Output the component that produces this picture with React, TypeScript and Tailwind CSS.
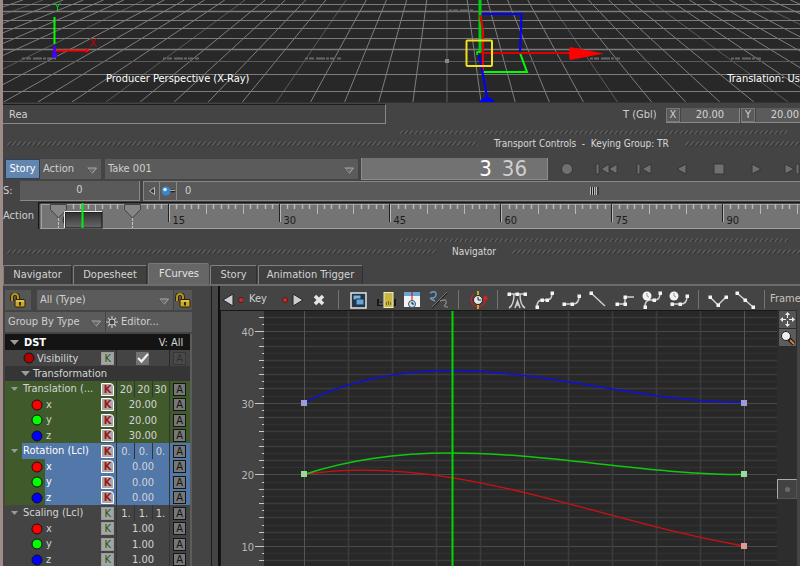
import React from "react";

const range = (from: number, to: number) =>
  Array.from({ length: to - from + 1 }, (_, i) => from + i);

/* ---------- shared bits ---------- */

function Caret({ className = "" }: { className?: string }) {
  return (
    <svg width="12" height="8" viewBox="0 0 12 8" className={className} aria-hidden="true">
      <path d="M1.500 1h9L6 6.500z" fill="#6a6a6a" stroke="#a8a8a8" />
      <path d="M6 7L1 1" stroke="#2e2e2e" strokeWidth="0.6" />
    </svg>
  );
}

function Picker({ label, value, className }: { label: string; value: string; className: string }) {
  return (
    <div className={`relative bg-[#5b5b5b] ${className}`}>
      <select
        aria-label={label}
        defaultValue={value}
        className="h-full w-full appearance-none bg-transparent pl-[3px] pr-4 text-[#cfcfcf] outline-none"
      >
        <option>{value}</option>
      </select>
      <Caret className="pointer-events-none absolute right-[3px] top-1/2 -mt-[2px]" />
    </div>
  );
}

function Hatch({ id, className }: { id: string; className: string }) {
  return (
    <svg className={className} aria-hidden="true">
      <defs>
        <pattern id={id} width="5" height="6" patternUnits="userSpaceOnUse">
          <path d="M0.5 4.5L3.5 0.5" stroke="#6c6c6c" strokeWidth="1" />
          <path d="M1.5 5.5L4.5 1.5" stroke="#303030" strokeWidth="1" />
        </pattern>
      </defs>
      <rect width="100%" height="100%" fill={`url(#${id})`} />
    </svg>
  );
}

function PanelTitle({ id, title, className, gap }: { id: string; title: string; className: string; gap: string }) {
  return (
    <div className={`flex flex-col ${className}`}>
      <div className="pl-[396px] pr-[10px]">
        <Hatch id={`${id}-top`} className="block h-[4px] w-full" />
      </div>
      <div className="flex h-[20px] items-center pl-1">
        <Hatch id={`${id}-left`} className={`h-[6px] shrink-0 ${gap}`} />
        <h2 className="mx-4 whitespace-pre text-[10px] leading-4 text-[#d8d8d8]">{title}</h2>
        <Hatch id={`${id}-right`} className="h-[6px] min-w-0 flex-1" />
      </div>
    </div>
  );
}

/* ---------- 3D viewport ---------- */

function Viewport() {
  return (
    <section className="relative h-[103px] shrink-0 overflow-hidden border-b border-[#333] bg-[#282828]">
      <svg viewBox="3 0 797 102" preserveAspectRatio="xMinYMin slice" className="h-full w-full" fill="none">
        {range(-42, 42).map((n) => (
          <line
            key={n}
            x1={447 + n * 20.2}
            y1="0"
            x2={447 + n * 34.1}
            y2="102"
            stroke={n === 0 ? "#4c4c4c" : n % 5 === 0 ? "#5c5c5c" : "#7e7e7e"}
            strokeWidth={n === 0 ? 1.5 : 1}
          />
        ))}
        {[4.5, 11.5, 20.5, 28.5, 38.5, 49.5, 61.5, 74.5, 91.5].map((y, i) => (
          <line
            key={y}
            x1="3"
            x2="800"
            y1={y}
            y2={y}
            stroke={y === 61.5 ? "#5a5a5a" : "#7c7c7c"}
            strokeWidth={i === 1 || i === 5 ? 1.5 : 1}
          />
        ))}
        <g stroke="#666" strokeWidth="2" strokeDasharray="3 1 5 2 9 1">
          <path d="M22 58.5h34M163 58.5h36M305 58.5h36M590 58.5h30M731 58.5h31M449 10.5h24" />
        </g>
        <rect x="445" y="59" width="4" height="4" fill="#888" />

        <path d="M54.5 50.5h33" stroke="#f00" strokeWidth="2" />
        <path d="M86 48l4 2.500-4 2.500z" fill="#f00" />
        <path d="M54.500 17v27" stroke="#0f0" strokeWidth="2" />
        <path d="M54.500 44l2 13h-4z" fill="#40f" stroke="#40f" />
        <path d="M54.500 3l3 4 3-4M57.500 7v4" stroke="#0d0" />
        <path d="M90.500 38l6 9M96.500 38l-6 9" stroke="#d00" />

        <path d="M480 14h41.500l-1.500 39" stroke="#00f" strokeWidth="2" />
        <path d="M520 53l7 19h-44" stroke="#0f0" strokeWidth="2" />
        <path d="M480 0v53" stroke="#0c1" strokeWidth="3" />
        <path d="M480 15l3 15v42" stroke="#e00" strokeWidth="2" />
        <path d="M479 55l4 20 4 22" stroke="#00f" strokeWidth="2" />
        <path d="M479 102q8-10 16 0z" fill="#00f" />
        <path d="M481 53h90" stroke="#d00" strokeWidth="2" />
        <path d="M570 47q-2 6 0 13l34-6.500z" fill="#f00" />
        <path d="M477 55v-3h3" stroke="#0f0" strokeWidth="1.500" />
        <rect x="466.500" y="40.500" width="25.500" height="25.500" rx="1" stroke="#f0e020" strokeWidth="2" />
      </svg>
      <p className="absolute left-[103px] top-[71px] leading-4 text-white">Producer Perspective (X-Ray)</p>
      <p className="absolute right-0 top-[71px] whitespace-nowrap leading-4 text-white">Translation: Us</p>
    </section>
  );
}

/* ---------- status line ---------- */

function AxisField({ axis }: { axis: string }) {
  return (
    <div className="flex h-[15px] shrink-0 gap-px border-b border-r border-[#888]">
      <button className="w-[14px] border border-[#777] bg-[#5a5a5a] leading-3 text-[#d0d0d0]">{axis}</button>
      <input aria-label={`T ${axis}`} defaultValue="20.00" className="w-[58px] bg-[#5b5b5b] text-center text-[#d4d4d4]" />
    </div>
  );
}

function StatusLine() {
  return (
    <div className="flex h-[26px] shrink-0 items-start justify-between overflow-hidden pt-px">
      <input
        aria-label="Status"
        defaultValue="Rea"
        className="h-[20px] w-[383px] border-b border-r border-t border-[#888] border-t-[#1c1c1c] bg-[#444] pl-[6px] text-[#d0d0d0]"
      />
      <div className="flex w-[177px] items-center gap-px pt-[3px]">
        <span className="w-[42px] shrink-0 text-[#cfcfcf]">T (Gbl)</span>
        <AxisField axis="X" />
        <AxisField axis="Y" />
      </div>
    </div>
  );
}

/* ---------- transport ---------- */

const transport: [string, React.ReactNode][] = [
  ["Record", <circle cx="19" cy="10" r="5.500" />],
  ["Go to start", <path d="M10 5v10h3V5zM23 5v10l-8-5zM31 5v10l-8-5z" />],
  ["Previous frame", <path d="M13 5v10h3V5zM27 5v10l-9-5z" />],
  ["Play backward", <path d="M24 5v10l-9-5z" />],
  ["Stop", <path d="M14 5h10v10H14z" />],
  ["Play", <path d="M14 5v10l9-5z" />],
  ["Next frame", <path d="M9 5v10l9-5zM20 5v10h3V5z" />],
];

function Transport() {
  return (
    <div className="flex h-[22px] shrink-0 items-start overflow-hidden pl-[2px]">
      <button className="mt-px h-[20px] w-[35px] shrink-0 border border-[#2f3f55] bg-[#6286b0] text-white">Story</button>
      <Picker label="Mode" value="Action" className="mt-px h-[20px] w-[61px] shrink-0" />
      <Picker label="Take" value="Take 001" className="ml-[4px] mt-px h-[20px] w-[253px] shrink-0" />
      <div className="ml-[3px] flex h-[22px] min-w-[187px] flex-1 items-center justify-end gap-[10px] border-b border-l border-r border-[#8c8c8c] bg-[#727272] pr-[20px] text-[22px] leading-[22px]">
        <output className="text-white">3</output>
        <output className="text-[#cfcfcf]">36</output>
      </div>
      <div className="flex w-[252px] shrink-0 overflow-hidden">
        {transport.map(([name, shape]) => (
          <button key={name} aria-label={name} className="h-[22px] w-[38px] shrink-0">
            <svg width="38" height="20" viewBox="0 0 38 20" fill="#707070" stroke="#363636">
              {shape}
            </svg>
          </button>
        ))}
      </div>
    </div>
  );
}

function Scrubber() {
  return (
    <div className="mt-px flex h-[20px] shrink-0 items-stretch overflow-hidden text-[#cfcfcf]">
      <label htmlFor="start" className="w-[17px] shrink-0 pt-[2px]">S:</label>
      <input id="start" defaultValue="0" className="w-[120px] shrink-0 border-b border-r border-[#8a8a8a] bg-[#5a5a5a] text-center" />
      <div className="ml-[3px] flex min-w-0 flex-1 border-y border-l border-[#888] bg-[#5a5a5a]">
        <button aria-label="Step back" className="flex w-[16px] items-center justify-center border-r border-[#888]">
          <svg width="6" height="8"><path d="M5.500 0.500v7L0.500 4z" fill="#333" stroke="#bbb" /></svg>
        </button>
        <button aria-label="Snap" className="flex w-[17px] items-center justify-center border-r border-[#888]">
          <svg width="15" height="10">
            <path d="M9 5h5M11.500 3.500v3" stroke="#222" strokeWidth="2" />
            <path d="M9 4.500h5" stroke="#aaa" />
            <circle cx="5" cy="5" r="4.500" fill="#3d86c6" />
            <circle cx="4" cy="3.500" r="1.800" fill="#d6efff" />
          </svg>
        </button>
        <span className="w-[412px] pl-[8px] pt-px">0</span>
        <svg width="10" height="18"><path d="M1.500 5v8M3.500 5v8M5.500 5v8M7.500 5v8" stroke="#bbb" /><path d="M2.500 5v8M4.500 5v8M9 5v8" stroke="#222" /></svg>
      </div>
    </div>
  );
}

const frameX = (f: number) => Math.round(59 + f * 7.387) - 0.5;

function Timeline() {
  return (
    <div className="mt-px flex h-[28px] shrink-0 items-stretch">
      <span className="w-[35px] shrink-0 pt-[6px] text-[#cfcfcf]">Action</span>
      <svg viewBox="38 203 762 28" preserveAspectRatio="xMinYMin slice" className="min-w-0 flex-1" fill="none">
        <defs>
          <linearGradient id="zone" x1="0" y1="0" x2="0" y2="1">
            <stop offset="0" stopColor="#303030" />
            <stop offset="1" stopColor="#686868" />
          </linearGradient>
        </defs>
        <rect x="39" y="203" width="800" height="27" fill="#747474" />
        <path d="M38.500 230V203.500H800" stroke="#161616" strokeWidth="2" />
        <path d="M41 205.500H800M41.500 205v24M40 229.500H800" stroke="#a0a0a0" />
        {range(1, 100).map((f) => {
          const end = f % 15 === 0 ? 223 : f % 5 === 0 ? 215 : 210;
          return (
            <React.Fragment key={f}>
              {f % 15 === 0 && <path d={`M${frameX(f) - 1} 205V${end}`} stroke="#222" />}
              <path d={`M${frameX(f)} 205V${end}`} stroke="#b8b8b8" strokeWidth={f % 5 ? 1.5 : 1} />
            </React.Fragment>
          );
        })}
        {[0, 10].map((f) => (
          <g key={f}>
            <path d={`M${frameX(f)} 219v10`} stroke="#c4c4c4" strokeDasharray="3 1" />
            <path d={`M${frameX(f) - 8} 205.500h16v5l-8 8.500-8-8.500z`} fill="#868686" stroke="#424242" />
          </g>
        ))}
        <text x="62" y="225" fontSize="11" fill="#222">0</text>
        <rect x="65" y="213" width="37" height="16" fill="url(#zone)" stroke="#111" />
        <path d="M64.500 229v-16.500H102" stroke="#eee" />
        <path d="M82.500 204v25" stroke="#0e1" strokeWidth="2" />
        {[15, 30, 45, 60, 75, 90].map((f) => (
          <text key={f} x={frameX(f) + 3} y="225" fontSize="11" fill="#1c1c1c">{f}</text>
        ))}
      </svg>
    </div>
  );
}

/* ---------- tabs ---------- */

const tabs: [string, string, boolean][] = [
  ["Navigator", "w-[69px]", false],
  ["Dopesheet", "w-[74px]", false],
  ["FCurves", "w-[61px]", true],
  ["Story", "w-[47px]", false],
  ["Animation Trigger", "w-[105px]", false],
];

function Tabs() {
  return (
    <div role="tablist" className="flex shrink-0 items-end gap-px border-b-2 border-[#6c6c6c] pt-px">
      {tabs.map(([name, width, active]) => (
        <button
          key={name}
          role="tab"
          aria-selected={active}
          className={`rounded-t-[2px] border-l border-t ${width} ${
            active ? "h-[21px] border-[#777] bg-[#666] text-[#e2e2e2]" : "h-[19px] border-r border-[#808080] border-r-[#303030] bg-[#404040] text-[#d4d4d4]"
          }`}
        >
          {name}
        </button>
      ))}
    </div>
  );
}

/* ---------- property tree ---------- */

function Lock() {
  return (
    <svg width="16" height="15" viewBox="0 0 16 15" aria-hidden="true">
      <path d="M2 8V4q0-3 3-3t3 3v3" fill="none" stroke="#1c1600" strokeWidth="3.500" />
      <path d="M2 8V4q0-3 3-3t3 3v3" fill="none" stroke="#b8941a" strokeWidth="2" />
      <rect x="5" y="6.500" width="10" height="7.500" rx="1" fill="#c9a824" stroke="#2a2200" />
      <path d="M6 8h8" stroke="#f0da70" />
      <rect x="9" y="9" width="2" height="3.500" fill="#332800" />
    </svg>
  );
}

type Row = {
  name: string;
  kind: "group" | "channel";
  values: string[];
  animated: boolean;
  selected: boolean;
  dot?: string;
};

const channels = (value: string[], animated: boolean, selected: boolean): Row[] =>
  ["x", "y", "z"].map((name, i) => ({
    name,
    kind: "channel",
    values: [value[i]],
    animated,
    selected,
    dot: ["#f00", "#0f0", "#00f"][i],
  }));

const rows: Row[] = [
  { name: "Translation (...", kind: "group", values: ["20", "20", "30"], animated: true, selected: false },
  ...channels(["20.00", "20.00", "30.00"], true, false),
  { name: "Rotation (Lcl)", kind: "group", values: ["0.", "0.", "0."], animated: true, selected: true },
  ...channels(["0.00", "0.00", "0.00"], true, true),
  { name: "Scaling (Lcl)", kind: "group", values: ["1.", "1.", "1."], animated: false, selected: false },
  ...channels(["1.00", "1.00", "1.00"], false, false),
];

function KeyButton({ hot }: { hot: boolean }) {
  return (
    <button
      aria-label="Key"
      className={`mx-auto block h-[13px] w-[13px] border text-[11px] leading-[11px] ${
        hot ? "rounded-tr-[4px] border-white bg-[#a8a8a8] font-bold text-[#a01515]" : "border-[#999] bg-[#a4a4a4] text-[#1f5a10]"
      }`}
    >
      K
    </button>
  );
}

function AButton({ dim = false }: { dim?: boolean }) {
  return (
    <button
      className={`mx-auto block h-[13px] w-[13px] border text-[11px] leading-[11px] ${
        dim ? "border-[#363636] bg-[#4a4a4a] text-[#303030]" : "border-[#151515] bg-[#777] text-[#111]"
      }`}
    >
      A
    </button>
  );
}

function Twisty({ className = "" }: { className?: string }) {
  return (
    <svg width="9" height="5" viewBox="0 0 9 5" className={`inline-block shrink-0 ${className}`} aria-hidden="true">
      <path d="M0 0h9L4.500 5z" fill="#9c9c9c" />
    </svg>
  );
}

function Dot({ color }: { color: string }) {
  return (
    <svg width="12" height="12" viewBox="0 0 12 12" className="shrink-0" aria-hidden="true">
      <circle cx="6" cy="6" r="5" fill={color} stroke="#111" />
    </svg>
  );
}

function PropertyTree() {
  return (
    <table className="w-full table-fixed border-collapse leading-[15px] text-[#d4d4d4] [&_td]:p-0 [&_th]:p-0">
      <colgroup>
        <col />
        <col className="w-[18px]" />
        <col className="w-[18px]" />
        <col className="w-[17px]" />
        <col className="w-[17px]" />
        <col className="w-[21px]" />
      </colgroup>
      <thead>
        <tr className="h-[16px] bg-[#141414]">
          <th colSpan={4} className="text-left font-bold text-white">
            <Twisty className="ml-[5px] mr-[5px] align-middle" />
            DST
          </th>
          <th colSpan={2} className="whitespace-nowrap text-center font-normal">
            V: All
          </th>
        </tr>
      </thead>
      <tbody>
        <tr className="h-[16px] bg-[#444]">
          <td>
            <div className="flex items-center gap-[2px] pl-[18px]"><Dot color="#b00000" />Visibility</div>
          </td>
          <td><KeyButton hot={false} /></td>
          <td colSpan={3} className="border-x border-[#282828]">
            <input
              type="checkbox"
              aria-label="Visibility"
              defaultChecked
              className="mx-auto block h-[13px] w-[13px] appearance-none bg-[#727272]"
            />
            <svg width="12" height="10" className="pointer-events-none mx-auto -mt-[12px] mb-[2px] block" aria-hidden="true">
              <path d="M1 5l3.500 3.500L11 1" fill="none" stroke="#f0f0f0" strokeWidth="2.200" />
            </svg>
          </td>
          <td><AButton dim /></td>
        </tr>
        <tr className="h-[15px] bg-[#353535]">
          <td colSpan={6}>
            <div className="flex items-center gap-[3px] pl-[16px]"><Twisty />Transformation</div>
          </td>
        </tr>
        {rows.map((row, i) => {
          const tone = row.selected ? "bg-[#5277a9]" : row.animated ? "bg-[#415a2c]" : "bg-[#444]";
          return (
            <tr key={i} className={`${i % 2 ? "h-[15px]" : "h-[16px]"} ${tone}`}>
              <td>
                <div className="flex">
                  <span
                    className={`flex shrink-0 items-center ${row.kind === "group" ? "w-[17px] pl-[6px]" : "w-[40px] pl-[26px]"} ${
                      row.animated ? "bg-[#415a2c]" : ""
                    } ${i % 2 ? "h-[15px]" : "h-[16px]"}`}
                  >
                    {row.dot ? (
                      <Dot color={row.dot} />
                    ) : (
                      <svg width="7" height="4" aria-hidden="true"><path d="M0 0h7L3.500 4z" fill="#9a9a9a" /></svg>
                    )}
                  </span>
                  <span className={`whitespace-nowrap pl-px ${row.selected ? "text-white" : ""}`}>{row.name}</span>
                </div>
              </td>
              <td><KeyButton hot={row.animated} /></td>
              {row.kind === "group" ? (
                row.values.map((v, k) => (
                  <td key={k} className="border-x border-[#333] text-center">{v}</td>
                ))
              ) : (
                <td colSpan={3} className="border-x border-[#333] text-center">{row.values[0]}</td>
              )}
              <td><AButton /></td>
            </tr>
          );
        })}
      </tbody>
    </table>
  );
}

function Sidebar() {
  return (
    <aside className="w-[208px] shrink-0 overflow-hidden pl-[2px] pt-[4px]">
      <div className="flex h-[20px] w-[187px]">
        <button aria-label="Lock list" className="flex w-[26px] items-center justify-center bg-[#565656]"><Lock /></button>
        <Picker label="Filter" value="All (Type)" className="ml-[6px] w-[136px]" />
        <button aria-label="Lock filter" className="ml-px flex flex-1 items-center justify-center bg-[#565656]"><Lock /></button>
      </div>
      <div className="mt-[2px] flex h-[20px] w-[187px]">
        <Picker label="Group" value="Group By Type" className="w-[100px] [&_select]:pr-2" />
        <button className="ml-px flex flex-1 items-center gap-[3px] bg-[#5b5b5b] text-[#d0d0d0]">
          <svg width="12" height="12" viewBox="0 0 12 12" aria-hidden="true">
            <path d="M6 0v12M0 6h12M2 2l8 8M10 2l-8 8" stroke="#c8c8c8" strokeWidth="1.200" />
            <circle cx="6" cy="6" r="3" fill="#444" stroke="#c8c8c8" />
          </svg>
          Editor...
        </button>
      </div>
      <div className="mt-[2px] w-[187px] border-r-2 border-[#5c5c5c]">
        <PropertyTree />
      </div>
    </aside>
  );
}

/* ---------- curve editor ---------- */

function Nodes({ at }: { at: [number, number][] }) {
  return (
    <>
      {at.map(([x, y]) => (
        <rect key={`${x}-${y}`} x={x - 1.5} y={y - 1.5} width="3.500" height="3.500" fill="#f4f4f4" stroke="none" />
      ))}
    </>
  );
}

const clock = (
  <>
    <circle cx="7" cy="6" r="4.500" fill="#f2f2f2" stroke="none" />
    <path d="M7 3v3l2 1" stroke="#999" strokeWidth="1" />
  </>
);

const toolGroups: [string, React.ReactNode][][] = [
  [
    ["Frame selection", <>
      <rect x="5" y="3" width="15" height="15" fill="#24384a" stroke="#e4e4e4" strokeWidth="1.500" />
      <path d="M7 5h8v5H7z" fill="#78b4de" stroke="#1a3044" strokeWidth="1" /><path d="M10 9h8v6h-8z" fill="#6aa6d4" stroke="#1a3044" strokeWidth="1" />
    </>],
    ["Frame time", <>
      <path d="M5 9v6h5M17 15h5V9M8 12v3" stroke="#161616" strokeWidth="2" />
      <path d="M6 14h4M18 14h3" stroke="#5588ac" strokeWidth="1" />
      <rect x="11" y="2.500" width="9" height="15" fill="#c9b745" stroke="#f2eec0" strokeWidth="1" /><path d="M13.500 12v3M15.500 11v4M17.500 12v3" stroke="#75691f" strokeWidth="1" />
    </>],
    ["Snap time", <>
      <rect x="4" y="3" width="16" height="14" fill="#f2f2f2" stroke="none" /><rect x="4" y="2" width="16" height="4" fill="#67a7d7" stroke="none" />
      <path d="M12 1v10" stroke="#d00" strokeWidth="1" /><circle cx="12" cy="14" r="3.500" fill="#c8e2f2" stroke="#35556d" strokeWidth="1" /><path d="M12 12v2h2" stroke="#111" strokeWidth="1" />
    </>],
    ["Ghost curves", <>
      <path d="M3 3q6-3 6 1t-4 4 3 3" stroke="#6d9cc0" /><path d="M20 3L5 18" stroke="#222" /><path d="M20 2L5 17" stroke="#777" strokeWidth="1" />
      <path d="M13 11q5-2 6 0t-1 4 3 2" stroke="#828282" />
    </>],
  ],
  [
    ["Auto key", <>
      <path d="M8 4a7 7 0 1 0 11 4" stroke="#b82626" /><path d="M16 9l4-4 2 5z" fill="#d22" stroke="none" />
      <path d="M12 1v18" stroke="#c8aa22" strokeWidth="2" /><circle cx="12" cy="10" r="4.500" fill="#e5e5e5" stroke="#222" strokeWidth="1" /><path d="M12 7v3h3" stroke="#222" strokeWidth="1" />
    </>],
  ],
  [
    ["Auto tangent", <>
      <path d="M4 4h16M4 18q5-3 5-14M20 18q-5-3-5-14M10 18l2.500-7 2.500 7M11 15h3" /><Nodes at={[[4, 4], [12, 4], [20, 4]]} />
    </>],
    ["Smooth tangent", <><path d="M5 17q0-7 5-7h5q5 0 5-7" /><Nodes at={[[5, 17], [10, 10], [15, 10], [20, 3]]} /></>],
    ["Flat tangent", <><path d="M5 14h9q6 0 6-8" /><Nodes at={[[5, 14], [13, 14], [20, 6]]} /></>],
    ["Linear tangent", <><path d="M5 3l14 13" /><Nodes at={[[5, 3]]} /></>],
    ["Stepped tangent", <><path d="M4 14h8V7h9" /><Nodes at={[[4, 14], [12, 14], [12, 7]]} /></>],
    ["Smooth clamp", <><path d="M5 17q0-7 5-7h5q5 0 5-7" /><Nodes at={[[5, 17], [14, 10], [20, 3]]} />{clock}</>],
    ["Flat clamp", <><path d="M5 14h9q6 0 6-8" /><Nodes at={[[5, 14], [13, 14], [20, 6]]} />{clock}</>],
  ],
  [
    ["Break tangent", <><path d="M4 7l8 8 8-8" /><Nodes at={[[4, 7], [12, 15], [20, 7]]} /></>],
    ["Unify tangent", <><path d="M4 3l16 14" /><Nodes at={[[4, 3], [12, 10], [20, 17]]} /></>],
  ],
];

function Separator() {
  return (
    <div className="flex h-[19px] w-[12px] shrink-0 justify-center">
      <span className="w-px bg-[#747474]" />
    </div>
  );
}

function CurveToolbar() {
  return (
    <div role="toolbar" className="flex h-[21px] shrink-0 items-center overflow-hidden">
      <div className="flex w-[112px] shrink-0 items-center pl-px">
        <button aria-label="Previous key">
          <svg width="22" height="14" className="block"><path d="M12 1v12L2 7z" fill="#cdcdcd" stroke="#222" /><circle cx="20" cy="7" r="2.500" fill="#cd2b2b" stroke="#5d1616" /></svg>
        </button>
        <span className="w-[38px] pl-[6px] text-[#cfcfcf]">Key</span>
        <button aria-label="Next key">
          <svg width="24" height="14" className="block"><circle cx="4" cy="7" r="2.500" fill="#cd2b2b" stroke="#5d1616" /><path d="M12 1v12l10-6z" fill="#cdcdcd" stroke="#222" /></svg>
        </button>
        <button aria-label="Delete key" className="ml-[7px]">
          <svg width="14" height="14" className="block" fill="none"><path d="M3 3l8 8M11 3l-8 8" stroke="#e6e6e6" strokeWidth="3.500" /></svg>
        </button>
      </div>
      {toolGroups.map((group, i) => (
        <React.Fragment key={i}>
          <Separator />
          {group.map(([name, icon]) => (
            <button key={name} aria-label={name} className="flex w-[27px] shrink-0 justify-center">
              <svg width="24" height="20" viewBox="0 0 24 20" fill="none" stroke="#cfcfcf" strokeWidth="1.500">{icon}</svg>
            </button>
          ))}
        </React.Fragment>
      ))}
      <Separator />
      <span className="ml-auto shrink-0 text-[#c9c2b8]">Frame</span>
    </div>
  );
}

const valueY = (v: number) => Math.round(617.6 - v * 7.16) + 0.5;

function CurveGraph() {
  return (
    <svg viewBox="220 310 557 256" preserveAspectRatio="xMinYMin slice" className="h-full min-w-0 flex-1" fill="none">
      <rect x="220" y="310" width="557" height="256" fill="#444" />
      <rect x="264" y="310" width="513" height="256" fill="#282828" />
      <path d="M220 310.500h557M220.500 310v256" stroke="#181818" />
      {range(8, 42).map((v) => (
        <g key={v}>
          <path
            d={`M264 ${valueY(v)}H777`}
            stroke={v % 10 === 0 ? "#4a4a4a" : v % 2 === 0 ? "#3b3b3b" : "#303030"}
            strokeWidth={v % 10 === 0 ? 1 : 1.5}
          />
          <path d={`M${v % 10 === 0 ? 255 : v % 2 === 0 ? 259 : 262} ${valueY(v)}H264`} stroke="#c8c8c8" />
        </g>
      ))}
      {range(0, 10).map((i) => (
        <path
          key={i}
          d={`M${Math.round(304 + i * 44) + 0.5} 311V566`}
          stroke={i % 5 === 0 ? "#555" : "#3c3c3c"}
          strokeWidth={i % 5 === 0 ? 1 : 1.5}
        />
      ))}
      {[10, 20, 30, 40].map((v) => (
        <text key={v} x="254" y={valueY(v) + 4} textAnchor="end" fontSize="11" fill="#b8b8b8">{v}</text>
      ))}
      <path d="M304 402.500C450.700 330.500 597.300 402.500 744 402.500" stroke="#1010dd" strokeWidth="1.500" />
      <path d="M304 474.500C450.700 452 597.300 521 744 546" stroke="#d01010" strokeWidth="1.300" />
      <path d="M304 474.500C450.700 426 597.300 474.500 744 474.500" stroke="#10c810" strokeWidth="1.500" />
      <path d="M452.500 311V566" stroke="#00d800" strokeWidth="2" />
      <g>
        <path d="M301 400h6v6h-6zM741 400h6v6h-6z" fill="#9c9cd8" />
        <path d="M301 471h6v6h-6zM741 471h6v6h-6z" fill="#9cd89c" />
        <path d="M741 543h6v6h-6z" fill="#dc9c9c" />
      </g>
    </svg>
  );
}

function CurveEditor() {
  return (
    <main className="flex min-w-0 flex-1 flex-col border-l-2 border-[#101010] pt-[3px]">
      <CurveToolbar />
      <div className="flex min-h-0 flex-1">
        <CurveGraph />
        <div className="flex w-[20px] shrink-0 flex-col items-center gap-px bg-[#2d2d2d] pt-px">
          <button aria-label="Pan" className="flex h-[17px] w-[17px] items-center justify-center bg-[#555]">
            <svg width="15" height="15" viewBox="0 0 15 15" fill="#eee" stroke="#eee">
              <path d="M7.500 2v11M2 7.500h11" /><path d="M7.500 0l2.500 3H5zM7.500 15l2.500-3H5zM0 7.500L3 5v5zM15 7.500L12 5v5z" stroke="none" />
              <path d="M6 6h3v3H6z" fill="#555" stroke="none" />
            </svg>
          </button>
          <button aria-label="Zoom" className="flex h-[17px] w-[17px] items-center justify-center bg-[#5c5c5c]">
            <svg width="15" height="15" viewBox="0 0 15 15">
              <path d="M9 9l5 5" stroke="#111" strokeWidth="4" /><path d="M10 10l4 4" stroke="#d68438" strokeWidth="2" />
              <circle cx="6" cy="6" r="4.500" fill="#eee" stroke="#222" />
            </svg>
          </button>
          <button aria-label="Handle" className="mt-[132px] flex h-[20px] w-[20px] items-center justify-center border border-[#555] border-l-[#aaa] border-t-[#aaa] bg-[#424242]">
            <span className="h-[5px] w-[5px] rounded-full bg-[#6b6b6b]" />
          </button>
        </div>
        <div className="w-[3px] shrink-0 bg-[#444]" />
      </div>
    </main>
  );
}

export default function App() {
  return (
    <div className="flex h-screen flex-col overflow-hidden border-l-[3px] border-[#a08c86] bg-[#444] font-['DejaVu_Sans_Condensed','DejaVu_Sans',sans-serif] text-[11px]">
      <Viewport />
      <StatusLine />
      <PanelTitle id="transport" title="Transport Controls  -  Keying Group: TR" className="h-[29px] pt-[1px]" gap="w-[471px]" />
      <Transport />
      <Scrubber />
      <Timeline />
      <PanelTitle id="navigator" title="Navigator" className="h-[32px] pt-[8px]" gap="w-[429px]" />
      <Tabs />
      <div className="flex min-h-0 flex-1">
        <Sidebar />
        <div className="w-[7px] shrink-0 border-l border-[#1c1c1c]" />
        <CurveEditor />
      </div>
    </div>
  );
}
